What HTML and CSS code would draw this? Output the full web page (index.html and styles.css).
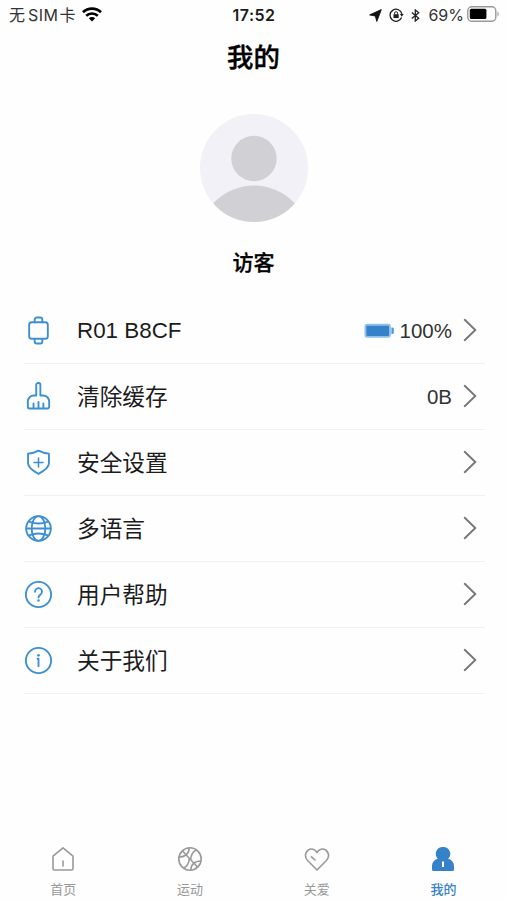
FILE: index.html
```
<!DOCTYPE html>
<html lang="zh-CN">
<head>
	<meta charset="utf-8">
	<title>我的</title>
	<meta name="viewport" content="width=device-width, initial-scale=1">
	<link rel="stylesheet" href="styles.css">
</head>
<body>

<div class="status">
	<div class="status-left">
		<span class="carrier">无<span class="sim">SIM</span>卡</span>
		<svg class="wifi" width="20" height="15" viewBox="0 0 20 15" fill="none" stroke="#000" stroke-width="2.7">
			<path d="M1 5.2a13 13 0 0 1 18 0M4.2 8.8a8.4 8.4 0 0 1 11.6 0"/>
			<path d="M10 14.5L6.8 11.3a4.6 4.6 0 0 1 6.4 0z" fill="#000" stroke="none"/>
		</svg>
	</div>
	<div class="clock">17:52</div>
	<div class="status-right">
		<svg class="location" width="13" height="13" viewBox="0 0 13 13"><path d="M12.3.6L7.8 12.4 6.3 7 .6 5.9z" fill="#111" stroke="#111" stroke-width=".9" stroke-linejoin="round"/></svg>
		<svg class="lock" width="15" height="14" viewBox="0 0 15 14" fill="none" stroke="#222" stroke-width="1.3">
			<path d="M12.6 9.5A6 6 0 1 1 12.9 6"/>
			<path d="M10.9 6h3.8l-1.9 2.8z" fill="#222" stroke="none"/>
			<path d="M5.6 6.5V5.2a1.5 1.5 0 0 1 3 0v1.3" stroke-width="1"/>
			<path d="M4.5 6.2h5.2v3.9H4.5z" fill="#222" stroke="none"/>
		</svg>
		<svg class="bt" width="9" height="13" viewBox="0 0 9 13" fill="none" stroke="#222" stroke-width="1.3"><path d="M.8 3.6l6.9 5.6-3.4 2.8V1l3.4 2.8L.8 9.4"/></svg>
		<span class="percent">69%</span>
		<svg class="battery" width="32" height="16" viewBox="0 0 32 16">
			<rect x=".8" y=".8" width="28" height="14.4" rx="4" fill="none" stroke="#999" stroke-width="1.4"/>
			<rect x="2.8" y="2.8" width="16.6" height="10.2" rx="1.5" fill="#000"/>
			<path d="M30.5 5.6c1.6.8 1.6 4 0 4.8z" fill="#999"/>
		</svg>
	</div>
</div>

<h1>我的</h1>

<div class="profile">
	<svg width="108" height="108" viewBox="0 0 108 108">
		<clipPath id="round"><circle cx="54" cy="54" r="54"/></clipPath>
		<g clip-path="url(#round)">
			<rect width="108" height="108" fill="#f2f1f7"/>
			<circle cx="54" cy="44.5" r="22.7" fill="#d1d0d5"/>
			<circle cx="54" cy="127" r="55.5" fill="#d1d0d5"/>
		</g>
	</svg>
	<div class="name">访客</div>
</div>

<div class="menu">
	<!-- device -->
	<div class="row">
		<svg class="icon" viewBox="0 0 28 28">
			<rect x="5" y="6" width="18" height="16" rx="2.5"/>
			<path d="M10.3 6V3.5a2 2 0 0 1 2-2h3.4a2 2 0 0 1 2 2V6M10.3 22.2v2.3a2 2 0 0 0 2 2h3.4a2 2 0 0 0 2-2v-2.3"/>
		</svg>
		<span class="label latin">R01 B8CF</span>
		<svg class="device-battery" width="30" height="16" viewBox="0 0 30 16">
			<rect x=".5" y=".8" width="26.4" height="14" rx="2.8" fill="#8fc0e8"/>
			<rect x="2.4" y="2.7" width="22.6" height="10.2" rx="1" fill="#3582c8"/>
			<path d="M27.4 4.6h1q1.4 0 1.4 1.2v4q0 1.2-1.4 1.2h-1z" fill="#4f99d6"/>
		</svg>
		<span class="value">100%</span>
		<svg class="arrow" viewBox="0 0 14 24"><path d="M1.2 1.2L12.3 12 1.2 22.8"/></svg>
	</div>
	<div class="row">
		<svg class="icon" viewBox="0 0 28 28">
			<path d="M11.8 13V2.7A1.7 1.7 0 0 1 13.5 1h.6a1.7 1.7 0 0 1 1.7 1.7V13h2.7a5.8 5.8 0 0 1 5.8 5.8V24a1.6 1.6 0 0 1-1.6 1.6H5.3A1.6 1.6 0 0 1 3.7 24v-5.2A5.8 5.8 0 0 1 9.5 13zM9.2 25.3v-4.6M14 25.3v-6M18.7 25.3v-4.6"/>
		</svg>
		<span class="label">清除缓存</span>
		<span class="value">0B</span>
		<svg class="arrow" viewBox="0 0 14 24"><path d="M1.2 1.2L12.3 12 1.2 22.8"/></svg>
	</div>
	<div class="row">
		<svg class="icon" viewBox="0 0 28 28">
			<path d="M14 2.5q4.6 2.5 10.1 2.9v9.2c0 4.2-4.6 7.6-10.1 10.3-5.5-2.7-10.1-6.1-10.1-10.3V5.4Q9.4 5 14 2.5z"/>
			<path d="M14 9.7v8.6M9.7 14h8.6" stroke-width="1.5"/>
		</svg>
		<span class="label">安全设置</span>
		<svg class="arrow" viewBox="0 0 14 24"><path d="M1.2 1.2L12.3 12 1.2 22.8"/></svg>
	</div>
	<div class="row">
		<svg class="icon" viewBox="0 0 28 28">
			<circle cx="14" cy="14" r="11.9"/>
			<ellipse cx="14" cy="14" rx="6.6" ry="11.9"/>
			<path d="M5.5 7.5q8.5 3.4 17 0M2.3 14h23.4M5.5 20.5q8.5-3.4 17 0"/>
		</svg>
		<span class="label">多语言</span>
		<svg class="arrow" viewBox="0 0 14 24"><path d="M1.2 1.2L12.3 12 1.2 22.8"/></svg>
	</div>
	<div class="row">
		<svg class="icon" viewBox="0 0 28 28">
			<circle cx="14" cy="14" r="12.2"/>
			<path d="M10.6 11.3a3.4 3.4 0 1 1 5.4 2.7c-1.4 1-2 1.5-2 3"/>
			<circle class="dot" cx="14" cy="19.7" r="1.2"/>
		</svg>
		<span class="label">用户帮助</span>
		<svg class="arrow" viewBox="0 0 14 24"><path d="M1.2 1.2L12.3 12 1.2 22.8"/></svg>
	</div>
	<div class="row">
		<svg class="icon" viewBox="0 0 28 28">
			<circle cx="14" cy="14" r="12.2"/>
			<path d="M13.2 12.3h.8v7.2"/>
			<circle class="dot" cx="14" cy="9" r="1.3"/>
		</svg>
		<span class="label">关于我们</span>
		<svg class="arrow" viewBox="0 0 14 24"><path d="M1.2 1.2L12.3 12 1.2 22.8"/></svg>
	</div>
</div>

<div class="tabs">
	<div class="tab">
		<svg viewBox="0 0 26 26"><path d="M3 10.2L13 1.8l10 8.4v12.2a1.6 1.6 0 0 1-1.6 1.6H4.6A1.6 1.6 0 0 1 3 22.4zM13 14.5v6"/></svg>
		首页
	</div>
	<div class="tab">
		<svg viewBox="0 0 26 26">
			<circle cx="13" cy="13" r="11.2"/>
			<path d="M5.5 5l15 16M12 2c.5 5-3.5 9-10 9M14 24c-.5-5 3.5-9 10-9M19.5 4c-3.5 1.5-5.5 4-5.8 9.5M6.5 22c3.5-1.5 5.5-4 5.8-9.5"/>
		</svg>
		运动
	</div>
	<div class="tab">
		<svg viewBox="0 0 26 26"><path d="M13 24L3.6 14.5C-1.4 9 3.5 1.7 9 3.3q2.5.7 4 3.2 1.5-2.5 4-3.2c5.5-1.6 10.4 5.7 5.4 11.2zM7 10.3l4.5 4.2"/></svg>
		关爱
	</div>
	<div class="tab active">
		<svg viewBox="0 0 26 26">
			<path class="solid" d="M12 .9a7 7 0 0 1 5.2 11.9c3.7 1.2 5.8 3.5 5.8 7.2v3.500q0 1.500-1.500 1.500h-19Q1 25 1 23.500V20c0-3.700 2.100-6 5.800-7.200A7 7 0 0 1 12 .9z"/>
			<path class="notch" d="M12 15.500v5.500"/>
		</svg>
		我的
	</div>
</div>

</body>
</html>
```
FILE: styles.css
```
* {
	box-sizing: border-box;
}
body {
	display: flex;
	flex-direction: column;
	height: 900px;
	margin: 0;
	background: #fefefe;
	color: #1c1c1c;
	font-family: "Liberation Sans", "Noto Sans CJK SC", sans-serif;
}
svg {
	display: block;
	flex: none;
}

/* status bar */
.status {
	display: grid;
	grid-template-columns: 1fr auto 1fr;
	align-items: center;
	height: 30px;
	padding: 0 8px 0 9px;
	font-family: Inter, "Noto Sans CJK SC", sans-serif;
	font-size: 16px;
	line-height: 30px;
}
.status-left,
.status-right {
	display: flex;
	align-items: center;
}
.status-right {
	justify-content: flex-end;
}
.carrier {
	color: #333;
}
.sim {
	margin: 0 1px 0 3px;
	letter-spacing: 0.5px;
}
.wifi {
	margin: 0 0 2px 6px;
}
.clock {
	font-weight: 600;
	letter-spacing: 0.5px;
}
.lock {
	margin-left: 7px;
}
.bt {
	margin-left: 7px;
}
.percent {
	margin: 0 3px 0 8px;
	color: #333;
}
.battery {
	margin-bottom: 2px;
}

h1 {
	height: 51px;
	margin: 0;
	font-family: "Noto Sans CJK SC", sans-serif;
	font-size: 26.4px;
	font-weight: 500;
	line-height: 51px;
	text-align: center;
	color: #000;
	-webkit-text-stroke: 0.4px #000;
}

/* avatar */
.profile {
	display: flex;
	flex-direction: column;
	align-items: center;
	height: 217px;
	padding-top: 33px;
}
.name {
	margin-top: 23px;
	font-family: "Noto Sans CJK SC", sans-serif;
	font-size: 21px;
	font-weight: 500;
	line-height: 32px;
	color: #000;
	-webkit-text-stroke: 0.3px #000;
}

/* list */
.menu {
	margin: 0 22px 0 24px;
}
.row {
	display: flex;
	align-items: center;
	height: 66px;
	border-bottom: 1px solid #f0f0f0;
}
.icon {
	width: 29px;
	height: 29px;
	margin-right: 24px;
	fill: none;
	stroke: #3c8fd3;
	stroke-width: 1.8;
	stroke-linecap: round;
	stroke-linejoin: round;
}
.icon .dot {
	fill: #3c8fd3;
	stroke: none;
}
.label {
	flex: 1;
	font-size: 22.7px;
	line-height: 34px;
}
.latin {
	font-size: 22.4px;
}
.device-battery {
	margin-right: 6px;
}
.value {
	font-size: 20.5px;
	color: #333;
}
.arrow {
	width: 14px;
	height: 24px;
	margin: 0 8px 2px 11px;
	fill: none;
	stroke: #777;
	stroke-width: 1.9;
}

/* bottom tabs */
.tabs {
	display: grid;
	grid-template-columns: repeat(4, 1fr);
	margin-top: auto;
	height: 54px;
}
.tab {
	display: flex;
	flex-direction: column;
	align-items: center;
	font-size: 13px;
	line-height: 18px;
	color: #999;
}
.tab svg {
	width: 26px;
	height: 26px;
	margin-bottom: 9px;
	fill: none;
	stroke: #999;
	stroke-width: 1.6;
	stroke-linejoin: round;
}
.tab.active {
	color: #3582c8;
	font-weight: 500;
}
.tab .solid {
	fill: #3582c8;
	stroke: none;
}
.tab .notch {
	stroke: #fff;
	stroke-width: 2;
}
```
